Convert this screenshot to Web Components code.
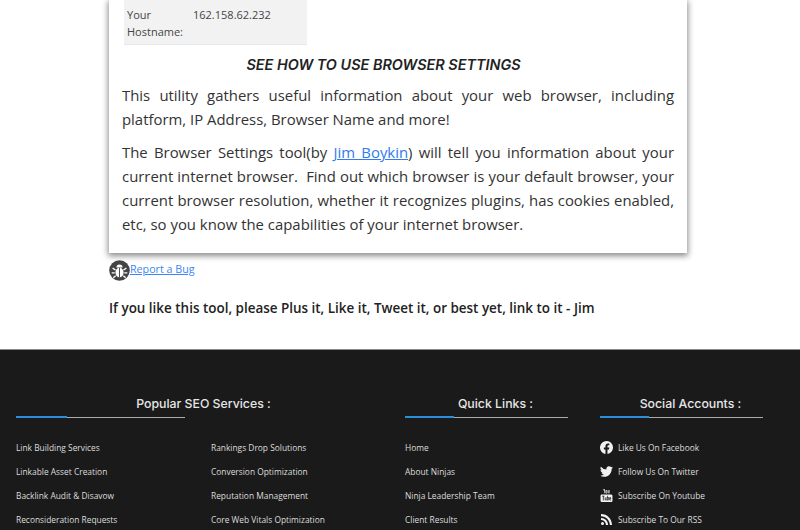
<!DOCTYPE html>
<html lang="en">
<head>
<meta charset="utf-8">
<title>Browser Settings</title>
<style>
  html, body { margin: 0; height: 530px; overflow: hidden; background: #fff; }
  body { font-family: "Open Sans", "Noto Sans", sans-serif; }
</style>
</head>
<body>
<tool-page>
  <tool-card>
    <host-table slot="table" label="Your Hostname:" value="162.158.62.232"></host-table>
    <span slot="title">SEE HOW TO USE BROWSER SETTINGS</span>
    <p>This utility gathers useful information about your web browser, including platform, IP Address, Browser Name and more!</p>
    <p>The Browser Settings tool(by <a href="#" style="color:#2f7bf0">Jim Boykin</a><span>) will tell you information about your </span><span>current internet browser.&nbsp; Find out which browser is your default browser, your current browser resolution, whether it recognizes plugins, has cookies enabled, etc, so you know the capabilities of your internet browser.</span></p>
  </tool-card>
  <bug-report></bug-report>
  <like-line>If you like this tool, please Plus it, Like it, Tweet it, or best yet, link to it - Jim</like-line>
</tool-page>
<site-footer>
  <footer-column heading="Popular SEO Services :" wide>
    <footer-link>Link Building Services</footer-link>
    <footer-link>Rankings Drop Solutions</footer-link>
    <footer-link>Linkable Asset Creation</footer-link>
    <footer-link>Conversion Optimization</footer-link>
    <footer-link>Backlink Audit &amp; Disavow</footer-link>
    <footer-link>Reputation Management</footer-link>
    <footer-link>Reconsideration Requests</footer-link>
    <footer-link>Core Web Vitals Optimization</footer-link>
  </footer-column>
  <footer-column heading="Quick Links :">
    <footer-link>Home</footer-link>
    <footer-link>About Ninjas</footer-link>
    <footer-link>Ninja Leadership Team</footer-link>
    <footer-link>Client Results</footer-link>
  </footer-column>
  <footer-column heading="Social Accounts :">
    <footer-link icon="facebook">Like Us On Facebook</footer-link>
    <footer-link icon="twitter">Follow Us On Twitter</footer-link>
    <footer-link icon="youtube">Subscribe On Youtube</footer-link>
    <footer-link icon="rss">Subscribe To Our RSS</footer-link>
  </footer-column>
</site-footer>

<script>
  // iconos de las cuentas sociales
  const ICONS = {
    facebook: '<svg viewBox="0 0 24 24" width="13" height="13"><path fill="#f2f2f2" d="M24 12a12 12 0 1 0-13.9 11.9v-8.4H7.1V12h3V9.400c0-3 1.800-4.700 4.500-4.700 1.300 0 2.700.2 2.700.2v3h-1.500c-1.500 0-2 .9-2 1.900V12h3.400l-.5 3.500h-2.900v8.400A12 12 0 0 0 24 12z"/></svg>',
    twitter: '<svg viewBox="0 0 24 24" width="13" height="13"><path fill="#f2f2f2" d="M24 4.600a9.800 9.800 0 0 1-2.800.8 4.900 4.900 0 0 0 2.200-2.700 9.900 9.900 0 0 1-3.100 1.200 4.900 4.900 0 0 0-8.400 4.500A14 14 0 0 1 1.700 3.200a4.900 4.900 0 0 0 1.500 6.600 4.900 4.900 0 0 1-2.200-.6c0 2.400 1.700 4.400 3.900 4.900a4.900 4.900 0 0 1-2.200.1 4.900 4.900 0 0 0 4.600 3.400A9.900 9.900 0 0 1 0 19.600a14 14 0 0 0 7.500 2.200c9.100 0 14.300-7.700 14-14.600A10 10 0 0 0 24 4.600z"/></svg>',
    youtube: '<svg viewBox="0 0 24 24" width="13" height="13"><path fill="#f2f2f2" d="M5 0h1.300l.9 3 .9-3h1.300L8.700 4.300V8H7.500V4.300zM11.700 2c1 0 1.600.6 1.600 1.500v3c0 1-.6 1.600-1.600 1.600s-1.600-.6-1.600-1.600v-3c0-.9.600-1.500 1.600-1.500zm-.4 1.300v3.400h.8V3.300zM14.300 2h1.200v4.800c.3.300.6.200.8-.1V2h1.200v6h-1.200v-.6c-.7.800-2 .9-2-.4zM3.500 10h17c1.400 0 2.500 1.100 2.500 2.500v9c0 1.400-1.100 2.500-2.500 2.500h-17A2.500 2.500 0 0 1 1 21.500v-9C1 11.100 2.100 10 3.500 10z"/><path fill="#1a1a1a" d="M4 12.500h4v1.200H6.700V21H5.300v-7.300H4zM8.800 15h1.200v4.500c.2.300.6.300.8 0V15H12v6h-1.200v-.6c-.7.800-2 .8-2-.4zM13 12.500h1.200v3c.7-.8 2-.7 2 .6v3.600c0 1.400-1.300 1.600-2 .7v.6H13zm1.200 4v3.400c.3.300.8.300.8-.1v-3.200c0-.4-.5-.4-.8-.1zM17.200 16.300c0-2 3.300-2 3.300 0v2.200h-2.100v1c0 .8 1 .8 1 0v-.5h1.100v.5c0 2.200-3.300 2.200-3.300 0zm1.200.1v1.100h1v-1.100c0-.7-1-.7-1 0z"/></svg>',
    rss: '<svg viewBox="0 0 24 24" width="11" height="11"><path fill="#f2f2f2" d="M3.300 17.400a3.300 3.300 0 1 0 0 6.600 3.300 3.300 0 0 0 0-6.600zM0 8.500v4.700c6 0 10.800 4.800 10.800 10.800h4.700C15.500 15.400 8.600 8.500 0 8.500zM0 0v4.700C10.700 4.700 19.300 13.300 19.300 24H24C24 10.700 13.300 0 0 0z"/></svg>'
  };

  class ToolPage extends HTMLElement {
    constructor() {
      super();
      this.attachShadow({ mode: 'open' });
      this.shadowRoot.innerHTML = `
        <style>
          :host { display: block; box-sizing: border-box; height: 349px; padding: 0 113px 0 109px; }
        </style>
        <slot></slot>
      `;
    }
  }

  class ToolCard extends HTMLElement {
    constructor() {
      super();
      this.attachShadow({ mode: 'open' });
      this.shadowRoot.innerHTML = `
        <style>
          :host {
            display: block;
            box-sizing: border-box;
            height: 253px;
            padding: 0 13px;
            background: #fff;
            color: #333;
            box-shadow: 0 2px 6px 1px rgba(0,0,0,.45);
          }
          .title {
            margin: 10px 29px 0 0;
            font: italic 600 14.4px/20px "Inter", "Open Sans", sans-serif;
            color: #222;
            text-align: center;
          }
          ::slotted(p) {
            margin: 0 0 9px;
            font-size: 14.9px;
            line-height: 24px;
            text-align: justify;
          }
          .text { padding-top: 8px; }
        </style>
        <slot name="table"></slot>
        <h3 class="title"><slot name="title"></slot></h3>
        <div class="text"><slot></slot></div>
      `;
    }
  }

  class HostTable extends HTMLElement {
    constructor() {
      super();
      this.attachShadow({ mode: 'open' });
      this.shadowRoot.innerHTML = `
        <style>
          :host {
            display: grid;
            grid-template-columns: 66px 1fr;
            box-sizing: border-box;
            width: 183px;
            height: 45px;
            margin-left: 2px;
            padding: 6px 3px 0;
            background: #f2f2f2;
            border-bottom: 1px solid #e4e8ea;
            color: #444;
            font-size: 11px;
            line-height: 17px;
          }
        </style>
        <span class="label"></span><span class="value"></span>
      `;
      this.shadowRoot.querySelector('.label').textContent = this.getAttribute('label');
      this.shadowRoot.querySelector('.value').textContent = this.getAttribute('value');
    }
  }

  class BugReport extends HTMLElement {
    constructor() {
      super();
      this.attachShadow({ mode: 'open' });
      this.shadowRoot.innerHTML = `
        <style>
          :host { display: flex; align-items: center; height: 22px; margin-top: 5px; font-size: 10.700px; }
          a { color: #3a86f5; text-decoration: underline; }
          svg { display: block; align-self: flex-start; margin-top: 2px; }
        </style>
        <svg viewBox="0 0 22 22" width="21" height="21">
          <circle cx="11" cy="11" r="10.800" fill="#444"/>
          <ellipse cx="11" cy="13.200" rx="4.300" ry="5" fill="#fff"/>
          <path d="M7.800 7.800a3.200 3.200 0 0 1 6.400 0z" fill="#fff"/>
          <path d="M11 8.200v10" stroke="#444" stroke-width="1"/>
          <path d="M6.800 10.500 3.800 8.500M15.200 10.500l3-2M6 13.500H2.800M16 13.500h3.200M7 16.500 4.500 18.500M15 16.500l2.500 2" stroke="#fff" stroke-width="1.400" fill="none"/>
        </svg>
        <a href="#">Report a Bug</a>
      `;
    }
  }

  class LikeLine extends HTMLElement {
    constructor() {
      super();
      this.attachShadow({ mode: 'open' });
      this.shadowRoot.innerHTML = `
        <style>
          :host { display: block; margin-top: 18px; font-size: 13.450px; line-height: 20px; font-weight: 600; color: #222; }
        </style>
        <slot></slot>
      `;
    }
  }

  class SiteFooter extends HTMLElement {
    constructor() {
      super();
      this.attachShadow({ mode: 'open' });
      this.shadowRoot.innerHTML = `
        <style>
          :host {
            display: grid;
            grid-template-columns: 375px 181px 181px;
            column-gap: 14px;
            box-sizing: border-box;
            height: 181px;
            padding: 44px 0 0 16px;
            background: #1a1a1a;
            border-top: 1px solid #8a8a8a;
            align-items: start;
          }
        </style>
        <slot></slot>
      `;
    }
  }

  class FooterColumn extends HTMLElement {
    constructor() {
      super();
      this.attachShadow({ mode: 'open' });
      this.shadowRoot.innerHTML = `
        <style>
          :host { display: block; }
          h4 {
            margin: 0;
            font: 500 12.300px/20px "Inter", "Open Sans", sans-serif;
            color: #e6e6e6;
            text-align: center;
          }
          .rule {
            position: relative;
            width: var(--rule, 163px);
            height: 1px;
            margin-top: 3px;
            background: #aaa;
          }
          .rule::after {
            content: "";
            position: absolute;
            left: 0;
            top: -1px;
            width: 30%;
            height: 2px;
            background: #2a8fd8;
          }
          .links {
            display: grid;
            grid-template-columns: var(--cols, 1fr);
            margin-top: 17px;
          }
        </style>
        <h4></h4>
        <div class="rule"></div>
        <div class="links"><slot></slot></div>
      `;
      this.shadowRoot.querySelector('h4').textContent = this.getAttribute('heading');
      if (this.hasAttribute('wide')) {
        this.style.setProperty('--rule', '169px');
        this.style.setProperty('--cols', '195px 180px');
      }
    }
  }

  class FooterLink extends HTMLElement {
    constructor() {
      super();
      this.attachShadow({ mode: 'open' });
      const icon = ICONS[this.getAttribute('icon')];
      this.shadowRoot.innerHTML = `
        <style>
          :host {
            display: flex;
            align-items: center;
            gap: 5px;
            height: 24px;
            font-size: 8.400px;
            color: #ddd;
            white-space: nowrap;
          }
          .icon { display: flex; justify-content: center; width: 13px; }
        </style>
        ${icon ? `<span class="icon">${icon}</span>` : ''}
        <slot></slot>
      `;
    }
  }

  customElements.define('tool-page', ToolPage);
  customElements.define('tool-card', ToolCard);
  customElements.define('host-table', HostTable);
  customElements.define('bug-report', BugReport);
  customElements.define('like-line', LikeLine);
  customElements.define('site-footer', SiteFooter);
  customElements.define('footer-column', FooterColumn);
  customElements.define('footer-link', FooterLink);
</script>
</body>
</html>
